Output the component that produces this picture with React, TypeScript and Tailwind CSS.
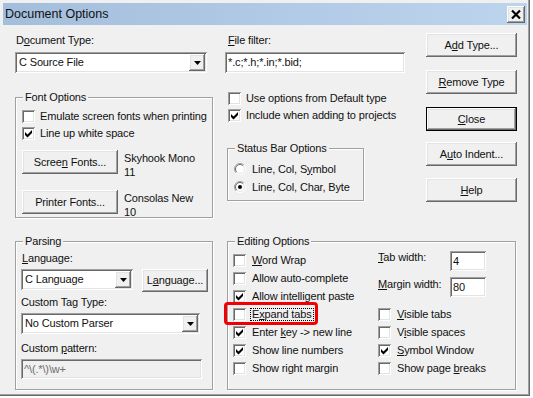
import React from "react";

const RAISED =
  "shadow-[inset_-1px_-1px_#696969,inset_1px_1px_#ffffff,inset_-2px_-2px_#a0a0a0,inset_2px_2px_#e3e3e3]";
const SUNKEN =
  "shadow-[inset_1px_1px_#a0a0a0,inset_-1px_-1px_#ffffff,inset_2px_2px_#696969,inset_-2px_-2px_#e3e3e3]";

function U({ children }: { children: React.ReactNode }) {
  return <span className="underline underline-offset-[1px] decoration-1">{children}</span>;
}

function Box({ checked }: { checked?: boolean }) {
  return (
    <div className={`w-[13px] h-[13px] shrink-0 bg-white ${SUNKEN}`}>
      {checked && (
        <svg width="13" height="13" viewBox="0 0 13 13">
          <polygon points="3,5 5.5,7.5 10,3 10,6 5.5,10.5 3,8" fill="#000" />
        </svg>
      )}
    </div>
  );
}

function Radio({ checked }: { checked?: boolean }) {
  return (
    <svg width="12" height="12" viewBox="0 0 12 12" className="shrink-0">
      <circle cx="6" cy="6" r="5.5" fill="#fff" />
      <path d="M2.1 9.9 A5.5 5.5 0 0 1 9.9 2.1" stroke="#a0a0a0" fill="none" />
      <path d="M2.8 9.2 A4.5 4.5 0 0 1 9.2 2.8" stroke="#696969" fill="none" />
      <path d="M9.9 2.1 A5.5 5.5 0 0 1 2.1 9.9" stroke="#ffffff" fill="none" />
      <path d="M9.2 2.8 A4.5 4.5 0 0 1 2.8 9.2" stroke="#e3e3e3" fill="none" />
      {checked && <circle cx="6" cy="6" r="2" fill="#000" />}
    </svg>
  );
}

function Btn({
  className,
  children,
  def,
}: {
  className: string;
  children: React.ReactNode;
  def?: boolean;
}) {
  if (def) {
    return (
      <div className={`border border-black ${className}`}>
        <div className={`w-full h-full flex items-center justify-center bg-[#f0f0f0] ${RAISED}`}>
          {children}
        </div>
      </div>
    );
  }
  return (
    <div className={`flex items-center justify-center bg-[#f0f0f0] ${RAISED} ${className}`}>
      {children}
    </div>
  );
}

function Combo({ className, text }: { className: string; text: string }) {
  return (
    <div className={`flex items-center bg-white p-[2px] ${SUNKEN} ${className}`}>
      <span className="flex-1 pl-[2px] whitespace-nowrap">{text}</span>
      <div className={`w-[16px] h-[17px] flex items-center justify-center bg-[#f0f0f0] ${RAISED}`}>
        <svg width="7" height="4" viewBox="0 0 7 4">
          <polygon points="0,0 7,0 3.5,4" fill="#000" />
        </svg>
      </div>
    </div>
  );
}

function Field({ className, text }: { className: string; text: string }) {
  return (
    <div className={`flex items-center pl-[3px] whitespace-nowrap ${SUNKEN} ${className}`}>
      {text}
    </div>
  );
}

function Group({
  title,
  className,
  children,
}: {
  title: string;
  className: string;
  children: React.ReactNode;
}) {
  return (
    <div
      className={`relative border border-[#a0a0a0] shadow-[inset_1px_1px_#ffffff,1px_1px_#ffffff] ${className}`}
    >
      <span className="absolute top-[-7px] left-[7px] px-[2px] bg-[#f0f0f0] leading-[13px] whitespace-nowrap">
        {title}
      </span>
      {children}
    </div>
  );
}

function CheckRow({
  checked,
  children,
  h = "h-[17px]",
  gap = "ml-[5px]",
}: {
  checked?: boolean;
  children: React.ReactNode;
  h?: string;
  gap?: string;
}) {
  return (
    <div className={`flex items-center ${h}`}>
      <Box checked={checked} />
      <span className={`${gap} whitespace-nowrap`}>{children}</span>
    </div>
  );
}

export default function App() {
  return (
    <div className="w-[533px] h-[398px] bg-white font-['Liberation_Sans',Arial,sans-serif] text-[11px] leading-[13px] tracking-[-0.15px] text-[#111]">
      <div className="w-[530px] h-[396px] bg-[#f0f0f0] shadow-[inset_-1px_-1px_#696969,inset_-2px_-2px_#a0a0a0]">
        {/* Title bar */}
        <div className="pt-[3px] pl-[3px]">
          <div className="w-[524px] h-[22px] bg-gradient-to-r from-[#a3bedc] to-[#bdd4ed] flex items-center justify-between pl-[2px] pr-[2px]">
            <span className="text-[12.5px] leading-[16px] tracking-normal">Document Options</span>
            <div className={`w-[18px] h-[17px] flex items-center justify-center bg-[#f0f0f0] ${RAISED}`}>
              <svg width="18" height="17" viewBox="0 0 18 17">
                <path d="M5 4.5 L13 12.5 M13 4.5 L5 12.5" stroke="#000" strokeWidth="2.2" />
              </svg>
            </div>
          </div>
        </div>

        {/* Top section */}
        <div className="flex items-start pl-[15px]">
          {/* Left column */}
          <div className="w-[198px]">
            <div className="mt-[9px] pl-[1px]">
              D<U>o</U>cument Type:
            </div>
            <Combo className="mt-[5px] w-[192px] h-[21px]" text="C Source File" />
            <Group title="Font Options" className="mt-[24px] w-[198px] h-[121px] pt-[10px] pl-[6px]">
              <CheckRow>Emulate screen fonts when printing</CheckRow>
              <CheckRow checked>Line up white space</CheckRow>
              <div className="flex items-start mt-[8px]">
                <Btn className="w-[96px] h-[24px]">
                  Scree<U>n</U>&nbsp;Fonts...
                </Btn>
                <div className="ml-[6px] mt-[1px] leading-[14px]">
                  <div>Skyhook Mono</div>
                  <div>11</div>
                </div>
              </div>
              <div className="flex items-start mt-[11px]">
                <Btn className="w-[96px] h-[24px]">Printer Fonts...</Btn>
                <div className="ml-[6px] mt-[1px] leading-[14px]">
                  <div>Consolas New</div>
                  <div>10</div>
                </div>
              </div>
            </Group>
          </div>

          {/* Middle column */}
          <div className="ml-[12px] w-[180px]">
            <div className="mt-[9px] pl-[3px]">
              <U>F</U>ile filter:
            </div>
            <Field className="mt-[5px] w-[180px] h-[21px] bg-white" text="*.c;*.h;*.in;*.bid;" />
            <div className="mt-[17px] ml-[3px]">
              <CheckRow>Use options from Default type</CheckRow>
              <CheckRow checked>Include when adding to projects</CheckRow>
            </div>
            <Group title="Status Bar Options" className="mt-[24px] ml-[2px] w-[137px] h-[53px] pt-[11px] pl-[6px]">
              <div className="flex items-center h-[18px]">
                <Radio />
                <span className="ml-[6px] whitespace-nowrap">
                  Line, Col, S<U>y</U>mbol
                </span>
              </div>
              <div className="flex items-center h-[18px]">
                <Radio checked />
                <span className="ml-[6px] whitespace-nowrap">Line, Col, Char, Byte</span>
              </div>
            </Group>
          </div>

          {/* Right column */}
          <div className="ml-[21px] w-[91px] flex flex-col">
            <Btn className="mt-[8px] w-[91px] h-[24px]">
              A<U>d</U>d Type...
            </Btn>
            <Btn className="mt-[13px] w-[91px] h-[24px]">
              <U>R</U>emove Type
            </Btn>
            <Btn def className="mt-[13px] w-[91px] h-[24px]">
              <U>C</U>lose
            </Btn>
            <Btn className="mt-[11px] w-[91px] h-[24px]">
              A<U>u</U>to Indent...
            </Btn>
            <Btn className="mt-[12px] w-[91px] h-[24px]">
              <U>H</U>elp
            </Btn>
          </div>
        </div>

        {/* Bottom section */}
        <div className="mt-[23px] flex items-start pl-[15px]">
          <Group title="Parsing" className="w-[198px] h-[149px] pt-[10px] pl-[5px]">
            <div className="pl-[1px]">
              <U>L</U>anguage:
            </div>
            <div className="flex items-start mt-[4px]">
              <Combo className="w-[112px] h-[21px]" text="C Language" />
              <Btn className="ml-[9px] w-[66px] h-[23px]">
                L<U>a</U>nguage...
              </Btn>
            </div>
            <div className="mt-[4px]">Custom Tag Type:</div>
            <Combo className="mt-[4px] w-[179px] h-[21px]" text="No Custom Parser" />
            <div className="mt-[8px]">
              Custom <U>p</U>attern:
            </div>
            <Field className="mt-[4px] w-[181px] h-[20px] text-[#6d6d6d]" text="^\(.*\)\w+" />
          </Group>

          <Group title="Editing Options" className="ml-[14px] w-[289px] h-[149px] pt-[9px] pl-[5px] flex">
            <div className="w-[145px]">
              <CheckRow h="h-[18px]" gap="ml-[6px]">
                <U>W</U>ord Wrap
              </CheckRow>
              <CheckRow h="h-[18px]" gap="ml-[6px]">Allow auto-complete</CheckRow>
              <CheckRow checked h="h-[18px]" gap="ml-[6px]">
                Allow intelligent paste
              </CheckRow>
              <div className="relative flex items-center h-[18px]">
                <Box />
                <span className="ml-[4px] border border-dotted border-black px-[1px] leading-[11px] whitespace-nowrap">
                  E<U>x</U>pand tabs
                </span>
                <div className="absolute left-[-9px] top-[-3px] w-[94px] h-[23px] border-[3px] border-[#f00000] rounded-[4px]" />
              </div>
              <CheckRow checked h="h-[18px]" gap="ml-[6px]">
                Enter <U>k</U>ey -&gt; new line
              </CheckRow>
              <CheckRow checked h="h-[18px]" gap="ml-[6px]">
                Show line numbers
              </CheckRow>
              <CheckRow h="h-[18px]" gap="ml-[6px]">Show right margin</CheckRow>
            </div>
            <div className="flex-1">
              <div className="flex items-start h-[20px]">
                <span className="w-[72px]">
                  <U>T</U>ab width:
                </span>
                <Field className="w-[36px] h-[20px] bg-white" text="4" />
              </div>
              <div className="flex items-start h-[20px] mt-[6px]">
                <span className="w-[72px] pt-[1px]">
                  <U>M</U>argin width:
                </span>
                <Field className="w-[36px] h-[20px] bg-white" text="80" />
              </div>
              <div className="mt-[8px]">
                <CheckRow h="h-[18px]" gap="ml-[6px]">
                  <U>V</U>isible tabs
                </CheckRow>
                <CheckRow h="h-[18px]" gap="ml-[6px]">
                  V<U>i</U>sible spaces
                </CheckRow>
                <CheckRow checked h="h-[18px]" gap="ml-[6px]">
                  <U>S</U>ymbol Window
                </CheckRow>
                <CheckRow h="h-[18px]" gap="ml-[6px]">
                  Show page <U>b</U>reaks
                </CheckRow>
              </div>
            </div>
          </Group>
        </div>
      </div>
    </div>
  );
}
